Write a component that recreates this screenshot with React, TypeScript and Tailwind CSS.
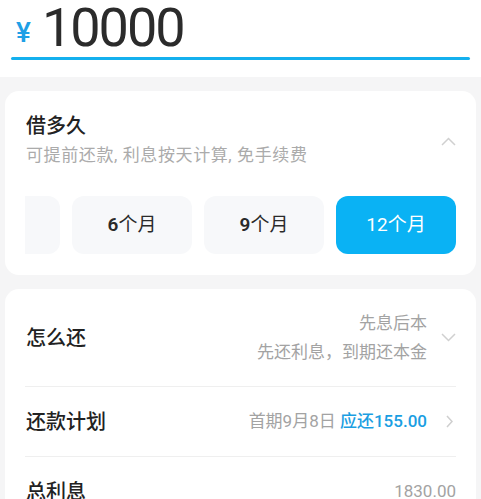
import { useState } from 'react';

const cjk = 'font-["Roboto","Noto_Sans_CJK_SC",sans-serif]';

const terms = [3, 6, 9, 12];

function ChevronUp() {
  return (
    <svg width="15" height="9" viewBox="0 0 15 9" fill="none">
      <path d="M1 8L7.5 1.5L14 8" stroke="#d0d0d0" strokeWidth="1.5" />
    </svg>
  );
}

function ChevronDown() {
  return (
    <svg width="15" height="9" viewBox="0 0 15 9" fill="none">
      <path d="M1 1L7.5 7.5L14 1" stroke="#d0d0d0" strokeWidth="1.5" />
    </svg>
  );
}

function ChevronRight() {
  return (
    <svg width="7" height="13" viewBox="0 0 7 13" fill="none">
      <path d="M1 1L6 6.5L1 12" stroke="#cfcfcf" strokeWidth="1.5" />
    </svg>
  );
}

function App() {
  const [term, setTerm] = useState(12);

  return (
    <div className={`h-[499px] overflow-hidden bg-[#f5f5f6] ${cjk}`}>
      {/* amount input */}
      <div className="bg-white px-[11px] pt-[1px] pb-[17px]">
        <div className="flex items-baseline pl-[5px]">
          <span className="relative bottom-[4px] text-[28px] font-medium leading-none text-[#1ea0e6]">
            ¥
          </span>
          <span className="ml-[11px] font-['Roboto',sans-serif] text-[54px] leading-none tracking-[-2px] text-[#2b2b2b]">
            10000
          </span>
        </div>
        <div className="mt-[2px] h-[3px] rounded-full bg-[#14b0ee]" />
      </div>

      {/* how long */}
      <div className="mx-[5px] mt-[14px] rounded-[14px] bg-white px-[20px] pt-[22px] pb-[21px]">
        <div className="flex items-center justify-between">
          <div className="pl-[1px]">
            <div className="text-[20px] leading-[26px] font-medium text-[#222]">借多久</div>
            <div className="mt-[5px] text-[17px] leading-[22px] tracking-[0.6px] text-[#ababab]">
              可提前还款, 利息按天计算, 免手续费
            </div>
          </div>
          <div className="mt-[4px]">
            <ChevronUp />
          </div>
        </div>
        <div className="mt-[30px] flex justify-end gap-[12px] overflow-hidden">
          {terms.map((t) => {
            const active = term === t;
            return (
              <button
                key={t}
                onClick={() => setTerm(t)}
                className={`flex h-[58px] w-[120px] shrink-0 items-center justify-center rounded-[12px] text-[19px] ${
                  active ? 'bg-[#0ab2f4] text-white' : 'bg-[#f7f8fa] text-[#2a2a2a]'
                }`}
              >
                <span className={active ? '' : 'font-semibold'}>{t}</span>个月
              </button>
            );
          })}
        </div>
      </div>

      {/* repayment */}
      <div className="mx-[5px] mt-[14px] rounded-[14px] bg-white px-[20px]">
        <div className="flex h-[98px] items-center border-b border-[#efefef]">
          <div className="flex-1 pl-[1px] text-[20px] font-medium text-[#222]">怎么还</div>
          <div className="text-right text-[17px] leading-[29px] text-[#a3a3a3]">
            <div>先息后本</div>
            <div>先还利息，到期还本金</div>
          </div>
          <div className="flex w-[29px] justify-end">
            <ChevronDown />
          </div>
        </div>
        <div className="flex h-[70px] items-center border-b border-[#efefef]">
          <div className="flex-1 pl-[1px] text-[20px] font-medium text-[#222]">还款计划</div>
          <div className="text-[17px] text-[#a3a3a3]">
            首期9月8日 <span className="font-medium text-[#1a9ee2]">应还155.00</span>
          </div>
          <div className="flex w-[29px] justify-end pr-[3px]">
            <ChevronRight />
          </div>
        </div>
        <div className="flex h-[70px] items-center">
          <div className="flex-1 pl-[1px] text-[20px] font-medium text-[#222]">总利息</div>
          <div className="text-[17px] text-[#a3a3a3]">1830.00</div>
        </div>
      </div>
    </div>
  );
}

export default App;
